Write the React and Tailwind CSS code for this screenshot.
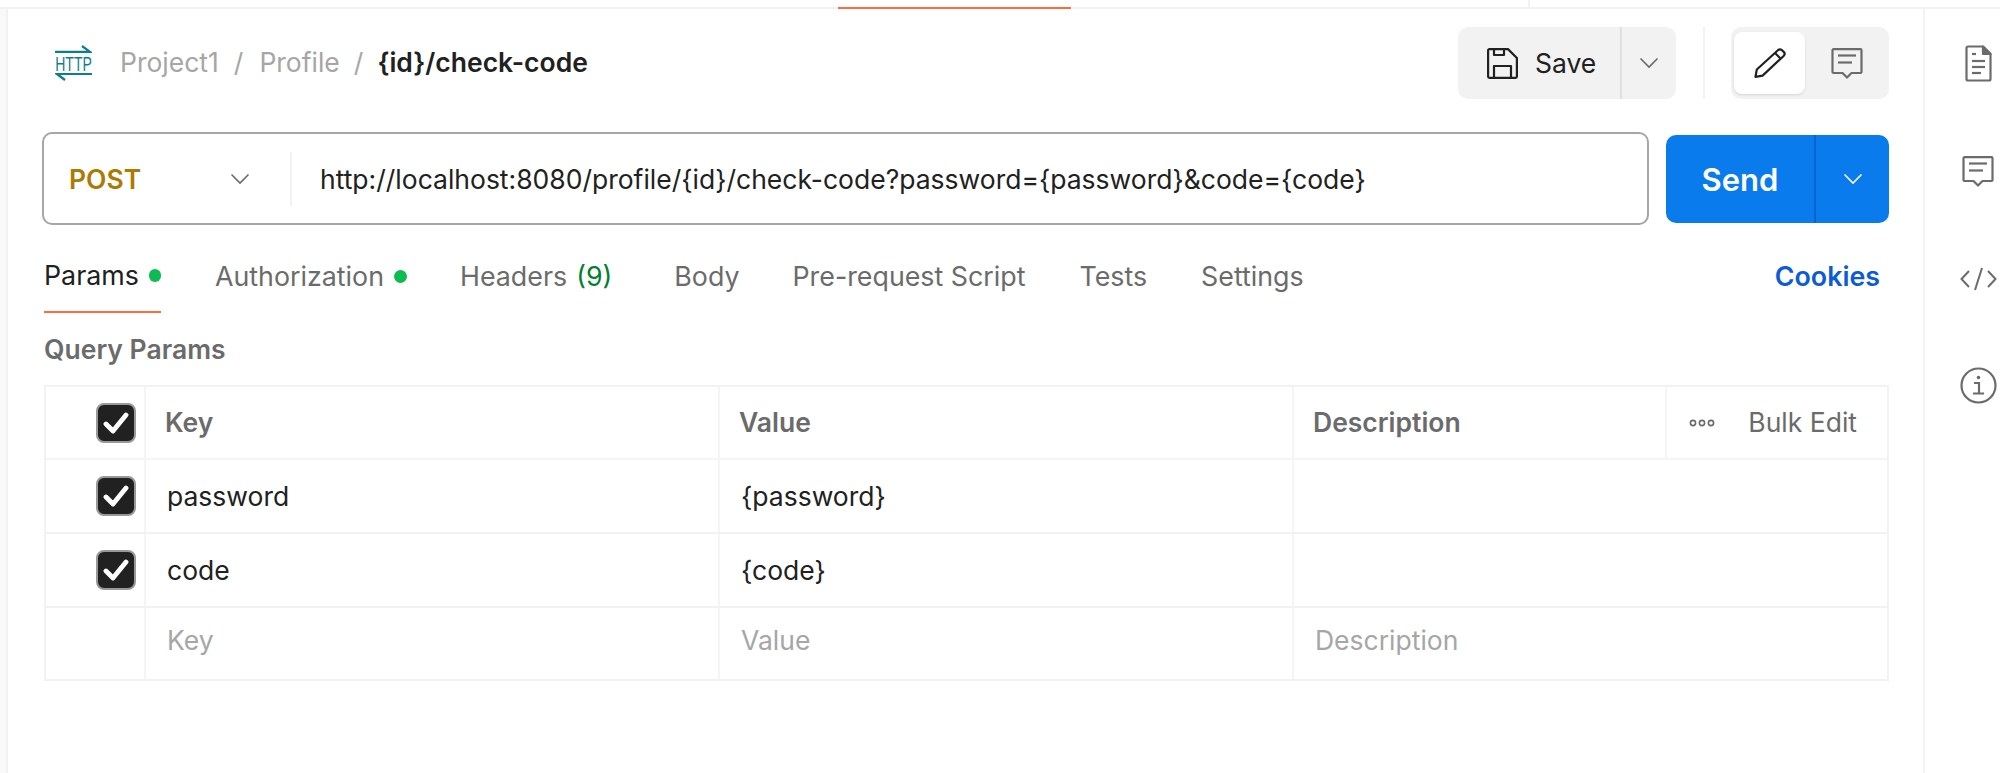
import React from "react";

const Chevron = ({ className = "" }) => (
  <svg width="20" height="12" viewBox="0 0 20 12" fill="none" stroke="currentColor" strokeWidth="1.6" className={className}>
    <path d="M1.5 1.5 L10 10 L18.5 1.5" />
  </svg>
);

const HttpIcon = () => (
  <div className="relative h-[36px] w-[37px] text-[#0c7f8c]">
    <svg width="37" height="36" viewBox="0 0 37 36" fill="none" stroke="#0c7f8c" strokeWidth="2.2">
      <path d="M0 6.8 H35 L27 1" />
      <path d="M37 29 H2 L10 35" />
    </svg>
    <span className="absolute left-[-10px] right-[-10px] top-[8.5px] scale-x-[0.7] text-center font-['Liberation_Sans'] text-[20px] leading-[20px] whitespace-nowrap">HTTP</span>
  </div>
);

const SaveIcon = () => (
  <svg width="31" height="31" viewBox="0 0 31 31" fill="none" stroke="#212121" strokeWidth="2.2" strokeLinejoin="round">
    <path d="M1.1 2.4 a1.3 1.3 0 0 1 1.3 -1.3 H21 L29.9 10 V28.6 a1.3 1.3 0 0 1 -1.3 1.3 H2.4 A1.3 1.3 0 0 1 1.1 28.6 Z" />
    <path d="M7 1.1 V7 H17 V1.1" />
    <path d="M7 29.9 V18 H24 V29.9" />
  </svg>
);

const PencilIcon = () => (
  <svg width="32" height="30" viewBox="0 0 32 30" fill="none" stroke="#212121" strokeWidth="2.2" strokeLinejoin="round">
    <path d="M1.5 28.8 L2.8 21.5 L24.2 2 Q26 0.7 28 2.2 L30.2 4.4 Q31.4 6.2 29.6 8 L8.6 27.6 Z" />
    <path d="M21 5 L27 11" />
  </svg>
);

const ChatIcon = () => (
  <svg width="32" height="31" viewBox="0 0 32 31" fill="none" stroke="#6b6b6b" strokeWidth="2.2" strokeLinejoin="round">
    <path d="M1.5 2.2 a1 1 0 0 1 1 -1 H29.5 a1 1 0 0 1 1 1 V24 a1 1 0 0 1 -1 1 H20.5 L16 29.5 L11.5 25 H2.5 a1 1 0 0 1 -1 -1 Z" />
    <path d="M7 7.5 H25" />
    <path d="M7 14.5 H21" />
  </svg>
);

const DocIcon = () => (
  <svg width="27" height="37" viewBox="0 0 27 37" fill="none" stroke="#6b6b6b" strokeWidth="2.2" strokeLinejoin="round">
    <path d="M1.5 3 a1.5 1.5 0 0 1 1.5 -1.5 H18 L25.5 9 V34 a1.5 1.5 0 0 1 -1.5 1.5 H3 A1.5 1.5 0 0 1 1.5 34 Z" />
    <path d="M18 1.5 L25.5 9 H18 Z" fill="#6b6b6b" />
    <path d="M7 9 H11" />
    <path d="M7 16 H20" />
    <path d="M7 22 H20" />
    <path d="M7 28 H16" />
  </svg>
);

const CodeIcon = () => (
  <svg width="37" height="24" viewBox="0 0 37 24" fill="none" stroke="#6b6b6b" strokeWidth="2">
    <path d="M9 4 L1.5 12 L9 20" />
    <path d="M22 1 L15 23" />
    <path d="M28 4 L35.5 12 L28 20" />
  </svg>
);

const InfoIcon = () => (
  <svg width="37" height="37" viewBox="0 0 37 37" fill="none" stroke="#6b6b6b" strokeWidth="2.2">
    <circle cx="18.5" cy="18.5" r="17" />
    <circle cx="18.5" cy="10.5" r="1.8" fill="#6b6b6b" stroke="none" />
    <path d="M14 16 H19 V26 M13 26.5 H24" />
  </svg>
);

const Check = () => (
  <div className="flex h-[40px] w-[40px] items-center justify-center rounded-[8px] border-[2px] border-[#999999] bg-[#212121]">
    <svg width="26" height="22" viewBox="0 0 26 22" fill="none" stroke="#ffffff" strokeWidth="4.8" strokeLinecap="round" strokeLinejoin="round">
      <path d="M3 12 L10 19 L23 3" />
    </svg>
  </div>
);

const Dot = () => <span className="ml-[10px] inline-block h-[13px] w-[13px] rounded-full bg-[#0cbb52]" />;

const Tab = ({ children, className = "text-[#6b6b6b]" }) => (
  <div className={`flex h-[74px] items-center text-[26.8px] ${className}`}>{children}</div>
);

const rowCell = "flex items-center border-r-2 border-[#f5f5f5]";

const Row = ({ check, k, v, d, muted, last }) => {
  const inset = last ? "pb-[6px]" : "";
  return (
    <div className={`grid grid-cols-[100px_574px_574px_1fr] ${last ? "h-[71px]" : "h-[74px] border-b-2 border-[#f2f2f2]"} ${muted ? "text-[#a6a6a6]" : "text-[#212121]"}`}>
      <div className={`${rowCell} justify-end pr-[8px]`}>{check && <Check />}</div>
      <div className={`${rowCell} pl-[21px] ${inset}`}>{k}</div>
      <div className={`${rowCell} pl-[21px] ${inset}`}>{v}</div>
      <div className={`flex items-center pl-[21px] ${inset}`}>{d}</div>
    </div>
  );
};

export default function App() {
  return (
    <div className="flex h-[773px] w-[2000px] flex-col overflow-hidden bg-white font-['Inter','Liberation_Sans',sans-serif] text-[26.5px] leading-none text-[#212121]">
      <div className="flex h-[9px] shrink-0 border-b-2 border-[#f2f2f2]">
        <div className="ml-[838px] h-[9px] w-[233px] border-b-2 border-[#ff6c37]" />
        <div className="ml-[457px] h-[7px] w-[2px] bg-[#f2f2f2]" />
      </div>

      <div className="flex min-h-0 flex-1">
        <div className="w-[8px] shrink-0 border-r-2 border-[#f2f2f2] bg-[#f9f9f9]" />

        <div className="flex w-[1917px] shrink-0 flex-col border-r-2 border-[#f2f2f2] pl-[36px] pr-[34px]">
          <div className="mt-[18px] flex h-[72px] items-center">
            <div className="ml-[11px]"><HttpIcon /></div>
            <div className="mb-[2px] ml-[28px] flex items-center text-[#a6a6a6]">
              <span>Project1</span>
              <span className="ml-[15px] mr-[16px]">/</span>
              <span>Profile</span>
              <span className="mx-[14px]">/</span>
              <span className="font-semibold text-[#212121]">{"{id}/check-code"}</span>
            </div>
            <div className="ml-auto flex h-[72px] items-center">
              <div className="flex h-[72px] w-[218px] items-center rounded-[10px] bg-[#f2f2f2]">
                <div className="flex h-full w-[164px] items-center gap-[17px] border-r-2 border-[#e0e0e0] pl-[29px]">
                  <SaveIcon />
                  <span>Save</span>
                </div>
                <div className="flex flex-1 justify-center text-[#6b6b6b]"><Chevron /></div>
              </div>
              <div className="ml-[27px] mr-[26px] h-[72px] w-[2px] bg-[#f2f2f2]" />
              <div className="flex h-[72px] w-[158px] items-center rounded-[10px] bg-[#f2f2f2] pl-[3px]">
                <div className="flex h-[62px] w-[71px] items-center justify-center rounded-[8px] bg-white shadow-sm"><PencilIcon /></div>
                <div className="flex flex-1 justify-center"><ChatIcon /></div>
              </div>
            </div>
          </div>

          <div className="mt-[33px] -ml-[2px] flex h-[93px] items-center">
            <div className="flex h-[93px] w-[1607px] items-center rounded-[10px] border-2 border-[#a6a6a6] pt-[1px]">
              <div className="flex h-[54px] w-[248px] items-center justify-between border-r-2 border-[#f2f2f2] pl-[25px] pr-[40px]">
                <span className="font-semibold text-[#ad7a03]">POST</span>
                <span className="text-[#6b6b6b]"><Chevron /></span>
              </div>
              <span className="ml-[28px] whitespace-nowrap">{"http://localhost:8080/profile/{id}/check-code?password={password}&code={code}"}</span>
            </div>
            <div className="ml-[17px] flex h-[88px] w-[223px] items-center rounded-[10px] bg-[#097bed] text-white">
              <div className="flex h-full w-[150px] items-center justify-center border-r-2 border-[#0265d2] pt-[1px] text-[31px] font-semibold">Send</div>
              <div className="flex flex-1 justify-center"><Chevron /></div>
            </div>
          </div>

          <div className="mt-[14px] flex items-center">
            <Tab className="w-[117px] border-b-2 border-[#ff6c37] text-[#212121]">
              <span>Params</span>
              <Dot />
            </Tab>
            <Tab className="ml-[54px] text-[#6b6b6b]"><span>Authorization</span><Dot /></Tab>
            <Tab className="ml-[53px] text-[#6b6b6b]"><span>Headers</span><span className="ml-[9px] text-[#007f31]">(9)</span></Tab>
            <Tab className="ml-[62px] text-[#6b6b6b]">Body</Tab>
            <Tab className="ml-[53px] text-[#6b6b6b]">Pre-request Script</Tab>
            <Tab className="ml-[54px] text-[#6b6b6b]">Tests</Tab>
            <Tab className="ml-[54px] text-[#6b6b6b]">Settings</Tab>
            <Tab className="ml-auto pr-[9px] font-semibold text-[#0b5cd6]">Cookies</Tab>
          </div>

          <div className="mt-[23px] h-[26px] font-semibold text-[#6b6b6b]">Query Params</div>

          <div className="mt-[23px] border-2 border-[#f2f2f2]">
            <div className="grid h-[73px] grid-cols-[100px_574px_574px_1fr] border-b-2 border-[#f5f5f5] font-semibold text-[#6b6b6b]">
              <div className={`${rowCell} justify-end pr-[8px]`}><Check /></div>
              <div className={`${rowCell} pl-[19px]`}>Key</div>
              <div className={`${rowCell} pl-[19px]`}>Value</div>
              <div className="flex items-center">
                <div className="flex h-full w-[371px] items-center pl-[19px]">Description</div>
                <div className="flex h-full flex-1 items-center justify-between border-l-2 border-[#f5f5f5] pl-[22px] pr-[30px] font-normal">
                  <svg width="26" height="8" viewBox="0 0 26 8" fill="none" stroke="#6b6b6b" strokeWidth="1.6">
                    <circle cx="4" cy="4" r="2.6" /><circle cx="13" cy="4" r="2.6" /><circle cx="22" cy="4" r="2.6" />
                  </svg>
                  <span>Bulk Edit</span>
                </div>
              </div>
            </div>
            <Row check k="password" v="{password}" />
            <Row check k="code" v="{code}" />
            <Row muted last k="Key" v="Value" d="Description" />
          </div>
        </div>

        <div className="flex flex-1 flex-col items-center">
          <div className="mt-[36px] flex flex-col items-center pl-[31px]">
            <DocIcon />
            <div className="mt-[74px]"><ChatIcon /></div>
            <div className="mt-[80px]"><CodeIcon /></div>
            <div className="mt-[76px]"><InfoIcon /></div>
          </div>
        </div>
      </div>
    </div>
  );
}
